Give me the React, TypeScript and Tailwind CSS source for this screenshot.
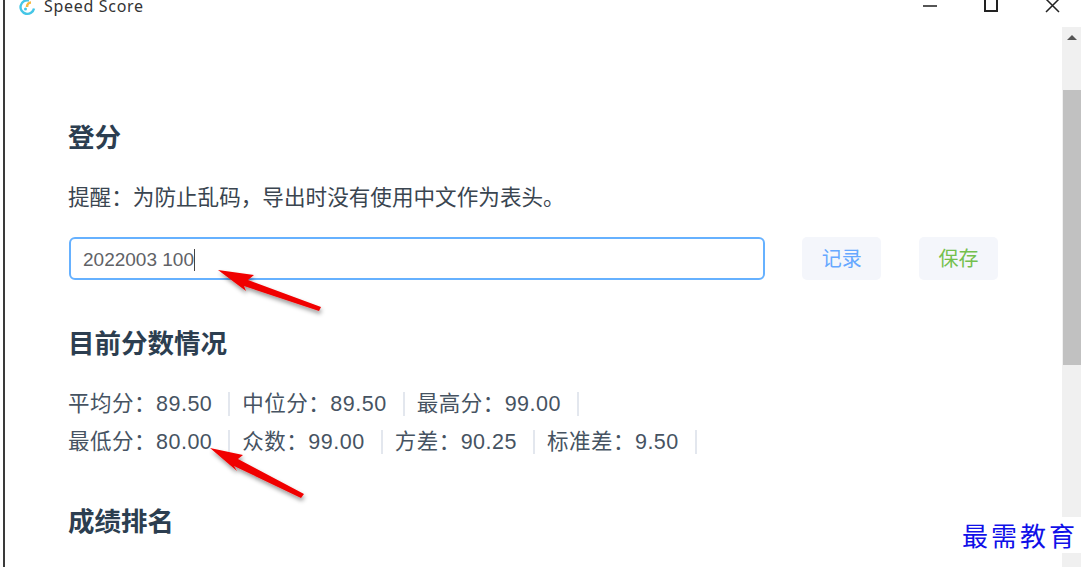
import React from 'react';

const FONT = "font-['Liberation_Sans','Noto_Sans_CJK_SC',sans-serif]";

const rows = [
    ['平均分：89.50', '中位分：89.50', '最高分：99.00'],
    ['最低分：80.00', '众数：99.00', '方差：90.25', '标准差：9.50'],
];

const Arrow: React.FC<{ className: string; d: string }> = ({ className, d }) => (
    <svg className={className} width="115" height="70" viewBox="0 0 115 70">
        <defs>
            <filter id="arrow-shadow" x="-20%" y="-20%" width="140%" height="150%">
                <feDropShadow dx="1" dy="3" stdDeviation="2" floodColor="#000" floodOpacity="0.4" />
            </filter>
        </defs>
        <path d={d} fill="#f00000" filter="url(#arrow-shadow)" />
    </svg>
);

const App: React.FC = () => {
    return (
        <div className={`relative w-[1083px] h-[567px] overflow-hidden bg-white ${FONT}`}>
            <div className="flex h-full border-l-[2px] border-[#3a3a3a] ml-[3px]">
                <div className="flex-1 flex flex-col min-w-0">
                    {/* title bar */}
                    <div className="h-[27px] flex items-start pl-[13px]">
                        <svg width="18" height="18" viewBox="0 0 18 18" className="-mt-[2px]">
                            <path d="M11 2.500a6.800 6.800 0 1 0 5 8" fill="none" stroke="#45c6e6" strokeWidth="2.400" />
                            <path d="M9 9c0-3 2-4.500 4-4.500" fill="none" stroke="#f4b942" strokeWidth="2.600" />
                            <circle cx="7.500" cy="11" r="1.500" fill="#45c6e6" />
                        </svg>
                        <span className="ml-[8px] -mt-[4px] text-[16px] leading-[20px] tracking-[0.7px] text-[#333] font-['Noto_Sans',sans-serif]">Speed Score</span>
                    </div>

                    {/* page content */}
                    <div className="pl-[64px] pr-[64px] text-[#2c3e50]">
                        <h2 className="mt-[93px] -ml-px text-[26.5px] leading-[36px] font-bold">登分</h2>
                        <p className="mt-[27px] -ml-px text-[21.6px] leading-[30px] text-[#3a4550]">提醒：为防止乱码，导出时没有使用中文作为表头。</p>
                        <div className="mt-[24px] flex items-center">
                            <div className="w-[697px] h-[43px] border-[2px] border-[#66b1ff] rounded-[6px] flex items-center pl-[12px] pt-[3px] text-[19px] text-[#606266]">
                                2022003 100
                                <span className="w-px h-[22px] bg-[#444]" />
                            </div>
                            <button className="ml-[37px] w-[79px] h-[43px] rounded-[5px] bg-[#f4f6fb] pt-px text-[20px] text-[#66a8ff]">记录</button>
                            <button className="ml-[38px] w-[79px] h-[43px] rounded-[5px] bg-[#f4f6fb] pt-px text-[20px] text-[#74c04e]">保存</button>
                        </div>
                        <h2 className="mt-[46px] -ml-px text-[26.5px] leading-[36px] font-bold">目前分数情况</h2>
                        <div className="mt-[27px] -ml-px flex flex-col gap-[11px] text-[21.5px] text-[#465362]">
                            {rows.map((row, i) => (
                                <div key={i} className="flex">
                                    {row.map(item => (
                                        <div key={item} className="whitespace-nowrap tracking-[0.5px] border-r-[2px] border-[#e3e7ee] h-[24px] mt-[3px] leading-[24px] pr-[16px] mr-[12px]">
                                            {item}
                                        </div>
                                    ))}
                                </div>
                            ))}
                        </div>
                        <h2 className="mt-[50px] -ml-px text-[26.5px] leading-[36px] font-bold">成绩排名</h2>
                    </div>
                </div>

                {/* scrollbar */}
                <div className="w-[19px] mr-[2px] mt-[27px] bg-[#f0f0f0] flex flex-col items-center shrink-0">
                    <div className="mt-[8px] w-0 h-0 border-l-[5px] border-r-[5px] border-b-[5px] border-l-transparent border-r-transparent border-b-[#555]" />
                    <div className="mt-[50px] w-[18px] h-[275px] bg-[#c1c1c1]" />
                </div>
            </div>

            {/* window buttons */}
            <div className="absolute top-[5px] left-[923px] w-[14px] h-[2px] bg-[#555]" />
            <div className="absolute -top-[3px] left-[984px] w-[14px] h-[15px] border-[2px] border-[#222]" />
            <svg className="absolute -top-[2px] left-[1045px]" width="15" height="15" viewBox="0 0 15 15">
                <path d="M1 1 L14 14 M14 1 L1 14" stroke="#222" strokeWidth="1.500" />
            </svg>

            {/* annotations */}
            <Arrow className="absolute left-[217px] top-[269px]" d="M1 1 L37 6 L31 11 L104 38 L102 42 L27 17 L29 22 Z" />
            <Arrow className="absolute left-[209px] top-[447px]" d="M1 1 L34 8 L29 12 L95 47 L92 51 L25 19 L28 24 Z" />

            <div className="absolute left-[959px] top-[517px] bg-white pl-[3px] pr-[3px] text-[26px] leading-[36px] tracking-[3px] text-[#1010e8] font-['Noto_Sans_CJK_SC',serif]">最需教育</div>
        </div>
    );
};

export default App;
